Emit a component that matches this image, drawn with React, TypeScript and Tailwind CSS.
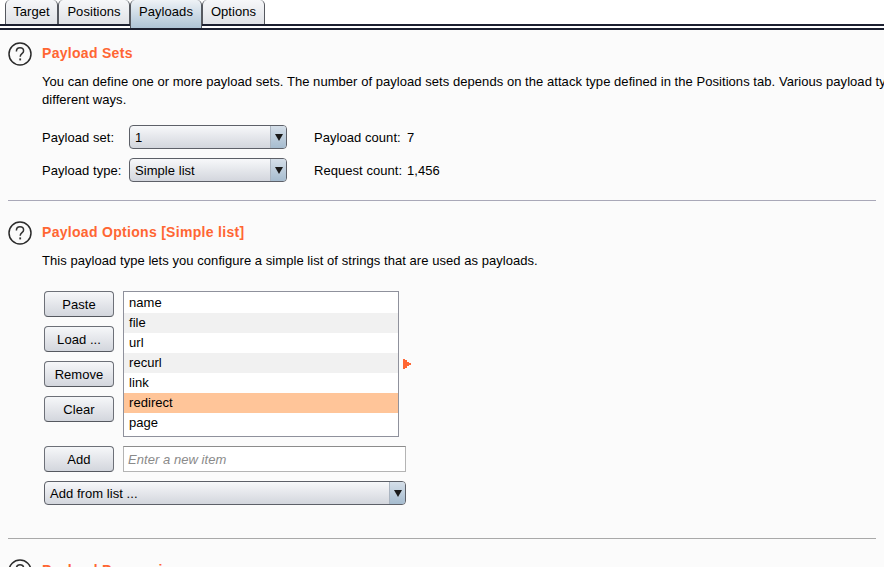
import type { ReactNode } from "react";

const tabs = ["Target", "Positions", "Payloads", "Options"];
const tabWidths = ["w-[53px]", "w-[72px]", "w-[72px]", "w-[63px]"];
const items = ["name", "file", "url", "recurl", "link", "redirect", "page"];
const buttons = ["Paste", "Load ...", "Remove", "Clear"];

const buttonClass =
  "flex h-[26px] w-[70px] items-center justify-center rounded-[4px] border border-[#6d7078] border-b-[#55585f] bg-gradient-to-b from-[#f6f7f9] to-[#d3d6dd] pt-[2px] text-[13px] tracking-[0.05px] text-black";

function HelpIcon() {
  return (
    <svg width="24" height="24" viewBox="0 0 24 24" className="shrink-0">
      <circle cx="12" cy="12" r="11" fill="none" stroke="#2b2b2b" strokeWidth="1.5" />
      <path d="M8.4 9.4c0-2.3 1.5-3.7 3.6-3.7s3.6 1.4 3.6 3.2c0 2.8-3.4 2.8-3.4 5.8" fill="none" stroke="#333" strokeWidth="1.5" />
      <rect x="11.3" y="16.4" width="1.8" height="2" fill="#333" />
    </svg>
  );
}

function Section({ title, children }: { title: string; children?: ReactNode }) {
  return (
    <div className="flex gap-[10px] pl-2">
      <HelpIcon />
      <div className="min-w-0">
        <h2 className="text-[14px] leading-[22px] font-bold tracking-[0.3px] whitespace-nowrap text-[#ff6633]">{title}</h2>
        {children}
      </div>
    </div>
  );
}

function Select({ label, widthClass }: { label: string; widthClass: string }) {
  return (
    <div className={`flex h-6 items-stretch overflow-hidden rounded-[4px] border border-[#5d6068] bg-gradient-to-b from-[#f7f8fa] to-[#d3d6dd] ${widthClass}`}>
      <span className="flex-1 pl-[5px] text-[13px] leading-6 tracking-[0.05px] text-black">{label}</span>
      <span className="flex w-4 items-center justify-center border-l border-[#aab4c0] bg-gradient-to-b from-[#d5dfe9] to-[#a6bccf]">
        <svg width="8" height="7" viewBox="0 0 8 7">
          <path d="M0 0h8L4 7z" fill="#1a1a1a" />
        </svg>
      </span>
    </div>
  );
}

function PayloadRow({ label, value, countLabel, count }: { label: string; value: string; countLabel: string; count: string }) {
  return (
    <div className="flex items-center text-[13px] tracking-[0.05px] text-black">
      <span className="w-[87px] pt-[2px]">{label}</span>
      <Select label={value} widthClass="w-[158px]" />
      <span className="ml-[27px] w-[93px] pt-[2px]">{countLabel}</span>
      <span className="pt-[2px]">{count}</span>
    </div>
  );
}

export default function App() {
  return (
    <div className="h-[567px] w-[884px] overflow-hidden bg-[#fbfbfb] font-['Liberation_Sans',Arial,sans-serif]">
      <div className="flex h-6 items-start bg-white pl-[5px]">
        {tabs.map((tab, i) => (
          <div
            key={tab}
            className={`flex items-start justify-center rounded-t-[5px] border border-t-0 border-b-0 border-[#55585f] pt-[4px] text-[13px] leading-4 tracking-[0.05px] text-black ${tabWidths[i]} ${
              i === 2
                ? "relative z-10 h-7 bg-gradient-to-b from-[#eef2f6] to-[#aec4d6]"
                : "h-6 bg-gradient-to-b from-[#f6f7f9] to-[#e0e2e7]"
            }`}
          >
            {tab}
          </div>
        ))}
      </div>
      <div className="h-[2px] bg-[#1c2030]" />
      <div className="h-[2px] bg-white" />
      <div className="h-[2px] bg-[#1c2030]" />

      <div className="pt-[12px]">
        <Section title="Payload Sets">
          <p className="mt-[9px] w-[842px] text-[13px] leading-[18px] tracking-[0.05px] whitespace-nowrap text-black">
            You can define one or more payload sets. The number of payload sets depends on the attack type defined in the Positions tab. Various payload ty
            <br />
            different ways.
          </p>
          <div className="mt-[16px] flex flex-col gap-[9px]">
            <PayloadRow label="Payload set:" value="1" countLabel="Payload count:" count="7" />
            <PayloadRow label="Payload type:" value="Simple list" countLabel="Request count:" count="1,456" />
          </div>
        </Section>

        <div className="mx-2 mt-[18px] h-px bg-[#a9a8b8]" />

        <div className="pt-[20px]">
          <Section title="Payload Options [Simple list]">
            <p className="mt-[9px] text-[13px] leading-[18px] tracking-[0.05px] whitespace-nowrap text-black">
              This payload type lets you configure a simple list of strings that are used as payloads.
            </p>
          </Section>
        </div>

        <div className="mt-[21px] ml-[44px] flex gap-[9px]">
          <div className="flex flex-col gap-[9px]">
            {buttons.map((label) => (
              <div key={label} className={buttonClass}>
                {label}
              </div>
            ))}
          </div>
          <div className="relative h-[146px] w-[276px] border border-[#8f919c] bg-white pt-px">
            {items.map((item, i) => (
              <div
                key={item}
                className={`h-5 pl-[5px] text-[13px] leading-5 tracking-[0.05px] text-black ${
                  item === "redirect" ? "bg-[#ffc599]" : i % 2 === 1 ? "bg-[#f1f1f1]" : "bg-white"
                }`}
              >
                {item}
              </div>
            ))}
            <svg width="8" height="10" viewBox="0 0 8 10" shapeRendering="crispEdges" className="absolute top-[67px] left-[279px]">
              <path d="M0 0h2v1h2v2h2v1h2v2H6v1H4v2H2v1H0z" fill="#ff6633" />
            </svg>
          </div>
        </div>

        <div className="mt-[9px] ml-[44px] flex gap-[9px]">
          <div className={buttonClass}>Add</div>
          <div className="flex h-[26px] w-[283px] items-center border border-[#b4b4b4] border-t-[#8c8c8c] bg-white pt-[2px] pl-[4px] text-[13px] tracking-[0.05px] text-[#8a8a8a] italic">
            Enter a new item
          </div>
        </div>

        <div className="mt-[9px] ml-[44px]">
          <Select label="Add from list ..." widthClass="w-[362px]" />
        </div>

        <div className="mx-2 mt-[33px] h-px bg-[#a9a9a9]" />

        <div className="pt-[20px]">
          <Section title="Payload Processing" />
        </div>
      </div>
    </div>
  );
}
